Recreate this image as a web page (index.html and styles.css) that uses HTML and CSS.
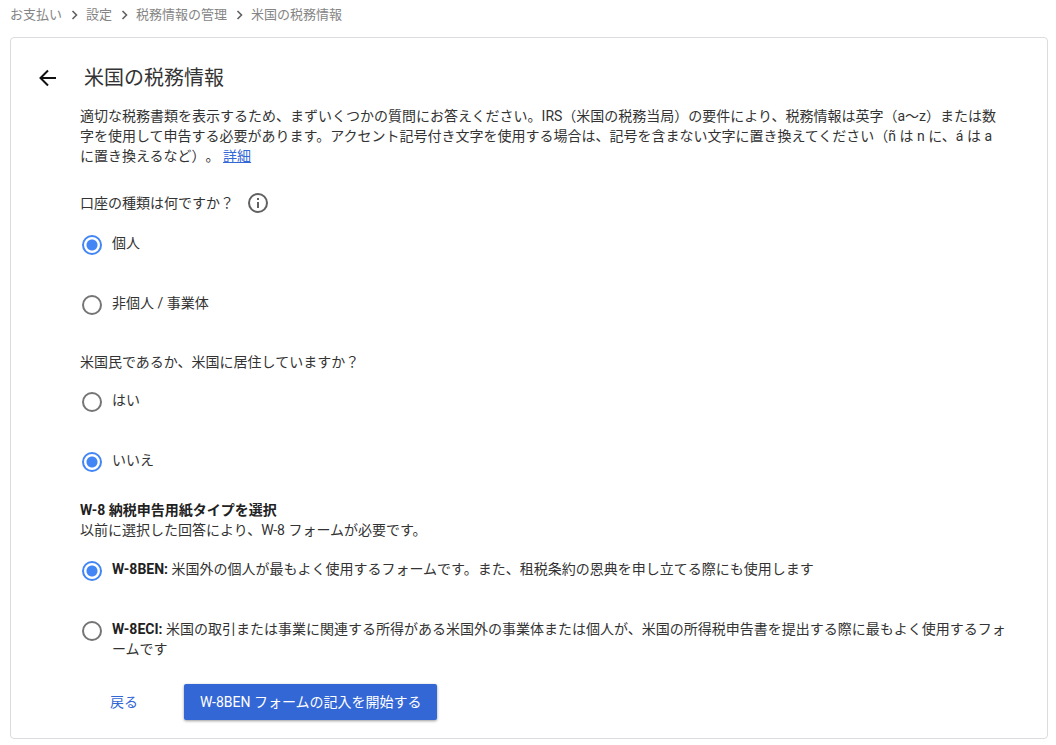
FILE: index.html
```html
<!DOCTYPE html>
<html lang="ja">
<head>
  <meta charset="UTF-8" />
  <meta name="viewport" content="width=device-width, initial-scale=1" />
  <title>米国の税務情報</title>
  <link rel="stylesheet" href="styles.css">
</head>
<body>
  <nav class="breadcrumb">
    <a href="#">お支払い</a>
    <svg viewBox="0 0 24 16"><path d="M10.5 4l4 4-4 4" /></svg>
    <a href="#">設定</a>
    <svg viewBox="0 0 24 16"><path d="M10.5 4l4 4-4 4" /></svg>
    <a href="#">税務情報の管理</a>
    <svg viewBox="0 0 24 16"><path d="M10.5 4l4 4-4 4" /></svg>
    <a href="#">米国の税務情報</a>
  </nav>

  <main class="card">
    <header class="card-header">
      <button class="icon-btn" type="button" aria-label="戻る">
        <svg viewBox="0 0 24 24"><path d="M20 12H5M12 4.5L4.5 12l7.5 7.5" /></svg>
      </button>
      <h1>米国の税務情報</h1>
    </header>

    <form class="tax-form">
      <p class="intro">適切な税務書類を表示するため、まずいくつかの質問にお答えください。IRS（米国の税務当局）の要件により、税務情報は英字（a～z）または数字を使用して申告する必要があります。アクセント記号付き文字を使用する場合は、記号を含まない文字に置き換えてください（ñ は n に、á は a に置き換えるなど）。 <a href="#">詳細</a></p>

      <fieldset class="question">
        <legend>
          <span class="legend-row">
            口座の種類は何ですか？
            <svg class="info" viewBox="0 0 24 24"><circle cx="12" cy="12" r="9" /><path d="M12 11v6M12 7v2" /></svg>
          </span>
        </legend>
        <div class="option">
          <input type="radio" name="account" id="individual" checked />
          <label for="individual">個人</label>
        </div>
        <div class="option">
          <input type="radio" name="account" id="entity" />
          <label for="entity">非個人 / 事業体</label>
        </div>
      </fieldset>

      <fieldset class="question">
        <legend>米国民であるか、米国に居住していますか？</legend>
        <div class="option">
          <input type="radio" name="resident" id="yes" />
          <label for="yes">はい</label>
        </div>
        <div class="option">
          <input type="radio" name="resident" id="no" checked />
          <label for="no">いいえ</label>
        </div>
      </fieldset>

      <fieldset class="question form-type">
        <legend>
          <strong>W-8 納税申告用紙タイプを選択</strong><br>
          以前に選択した回答により、W-8 フォームが必要です。
        </legend>
        <div class="option">
          <input type="radio" name="w8" id="w8ben" checked />
          <label for="w8ben"><strong>W-8BEN:</strong> 米国外の個人が最もよく使用するフォームです。また、租税条約の恩典を申し立てる際にも使用します</label>
        </div>
        <div class="option">
          <input type="radio" name="w8" id="w8eci" />
          <label for="w8eci"><strong>W-8ECI:</strong> 米国の取引または事業に関連する所得がある米国外の事業体または個人が、米国の所得税申告書を提出する際に最もよく使用するフォームです</label>
        </div>
      </fieldset>

      <div class="actions">
        <button class="btn btn-text" type="button">戻る</button>
        <button class="btn btn-primary" type="button">W-8BEN フォームの記入を開始する</button>
      </div>
    </form>
  </main>
</body>
</html>
```
FILE: styles.css
```css
:root {
  --blue: #4285f4;
  --blue-dark: #3367d6;
  --text: #333;
  --text-strong: #212121;
  --muted: #757575;
  --muted-light: #858585;
  --border: #dadce0;
}

*, *::before, *::after { box-sizing: border-box; }

body {
  margin: 0;
  padding: 5px 8px 6px 10px;
  background: #fff;
  color: var(--text);
  font-family: Roboto, 'Noto Sans CJK JP', sans-serif;
  font-size: 14px;
  line-height: 20px;
  text-spacing-trim: space-all;
}

strong {
  color: var(--text-strong);
}

.breadcrumb {
  display: flex;
  align-items: center;
  font-size: 13px;
  margin-bottom: 12px;
}

.breadcrumb a {
  color: var(--muted-light);
  text-decoration: none;
}

.breadcrumb svg {
  width: 24px;
  height: 16px;
  fill: none;
  stroke: #616161;
  stroke-width: 1.6;
}

.card {
  border: 1px solid var(--border);
  border-radius: 4px;
  padding: 26px 38px 18px 25px;
}

.card-header {
  display: flex;
  align-items: center;
  gap: 24px;
  margin-bottom: 14px;
}

.card-header h1 {
  margin: 0;
  font-size: 20px;
  font-weight: 400;
  line-height: 28px;
}

.icon-btn {
  display: flex;
  padding: 0;
  border: none;
  background: none;
  cursor: pointer;
}

.icon-btn svg {
  width: 24px;
  height: 24px;
  fill: none;
  stroke: #111;
  stroke-width: 2;
}

.tax-form {
  padding-left: 44px;
}

.intro {
  margin: 0 0 25px;
}

.intro a {
  color: var(--blue-dark);
}

.question {
  min-width: 0;
  margin: 0 0 37px;
  padding: 0;
  border: none;
}

.question legend {
  padding: 0 0 18px;
}

.question + .question {
  margin-bottom: 28px;
}

.question.form-type {
  margin-bottom: 25px;
}

.question.form-type legend {
  padding-bottom: 19px;
}

.legend-row {
  display: flex;
  align-items: center;
  gap: 12px;
}

.info {
  width: 24px;
  height: 24px;
  fill: none;
  stroke: #616161;
  stroke-width: 2;
}

.option {
  display: flex;
  align-items: flex-start;
  gap: 10px;
  min-height: 22px;
  padding-left: 2px;
}

.option + .option {
  margin-top: 38px;
}

.option input {
  flex: none;
  appearance: none;
  width: 20px;
  height: 20px;
  margin: 2px 0 0;
  border: 2px solid var(--muted);
  border-radius: 50%;
  cursor: pointer;
}

.option input:checked {
  border-color: var(--blue);
  background: radial-gradient(circle, var(--blue) 5px, transparent 6px);
}

.actions {
  display: flex;
  gap: 30px;
  padding-left: 14px;
}

.btn {
  height: 36px;
  padding: 0 16px;
  border: none;
  border-radius: 2px;
  background: none;
  font: inherit;
  cursor: pointer;
}

.btn-text {
  color: var(--blue-dark);
}

.btn-primary {
  background: var(--blue-dark);
  color: #fff;
  box-shadow: 0 1px 3px rgba(0, 0, 0, 0.4);
}
```
